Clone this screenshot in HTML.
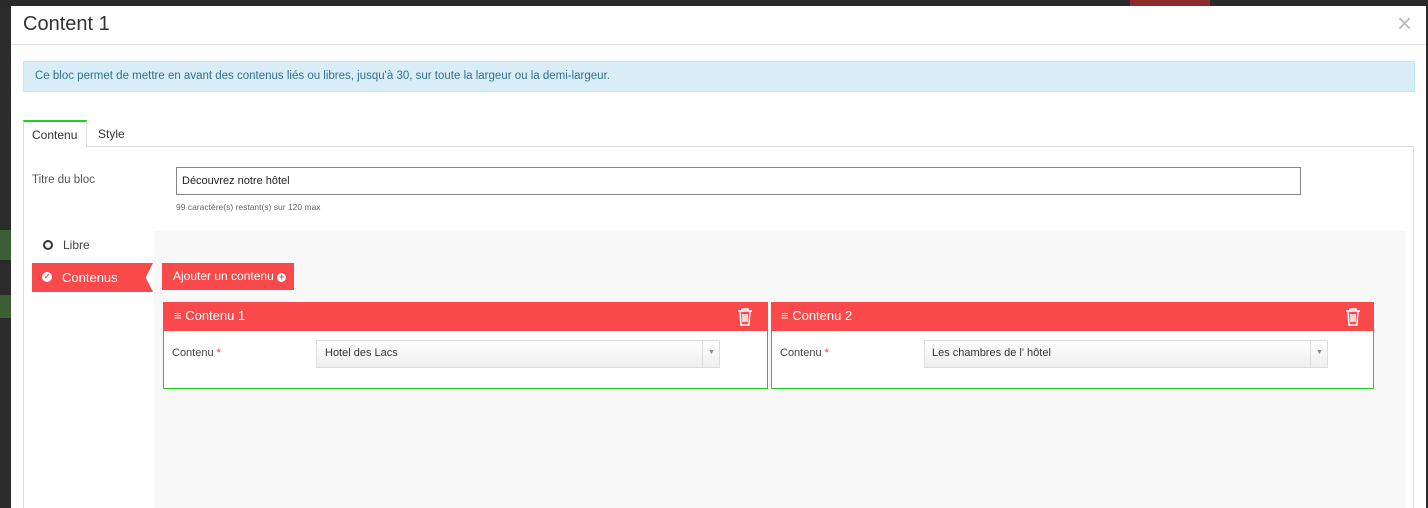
<!DOCTYPE html>
<html><head><style>
*{box-sizing:border-box;margin:0;padding:0}
body{width:1428px;height:508px;overflow:hidden;background:#2b2b2b;font-family:"Liberation Sans",sans-serif;position:relative;color:#333}
.a{position:absolute;white-space:nowrap}
</style></head><body>
<div class="a" style="left:0;top:0;width:1428px;height:6px;background:#2a2a2a"></div>
<div class="a" style="left:1130px;top:0;width:80px;height:6px;background:#8b2b2b"></div>
<div class="a" style="left:0;top:230px;width:11px;height:30px;background:#3b5e35"></div>
<div class="a" style="left:0;top:295px;width:11px;height:23px;background:#3b5e35"></div>
<div class="a" style="left:11px;top:6px;width:1415px;height:502px;background:#fff"></div>
<div class="a" style="left:23px;top:13px;font-size:20px;color:#333">Content 1</div>
<div class="a" style="left:1397px;top:8px;font-size:26px;color:#bbb;font-weight:300">×</div>
<div class="a" style="left:11px;top:44px;width:1415px;height:1px;background:#e5e5e5"></div>
<div class="a" style="left:23px;top:61px;width:1392px;height:31px;background:#d9edf7;border:1px solid #bce8f1;color:#31708f;font-size:11.5px;padding:8px 11px">Ce bloc permet de mettre en avant des contenus liés ou libres, jusqu'à 30, sur toute la largeur ou la demi-largeur.</div>
<div class="a" style="left:23px;top:146px;width:1391px;height:1px;background:#ddd"></div>
<div class="a" style="left:23px;top:146px;width:1px;height:362px;background:#ddd"></div>
<div class="a" style="left:1413px;top:146px;width:1px;height:362px;background:#ddd"></div>
<div class="a" style="left:23px;top:120px;width:64px;height:27px;background:#fff;border:1px solid #ddd;border-bottom:none;border-top:2px solid #1fd01f;font-size:12px;padding:6px 8px;color:#333">Contenu</div>
<div class="a" style="left:98px;top:127px;font-size:12px;color:#333">Style</div>
<div class="a" style="left:32px;top:174px;font-size:11.5px;color:#555">Titre du bloc</div>
<div class="a" style="left:176px;top:167px;width:1125px;height:28px;border:1px solid #888;font-size:11px;padding:7px 5px;color:#222">Découvrez notre hôtel</div>
<div class="a" style="left:176px;top:202px;font-size:8.5px;color:#666">99 caractère(s) restant(s) sur 120 max</div>
<div class="a" style="left:154px;top:231px;width:1252px;height:277px;background:#f8f8f8"></div>
<div class="a" style="left:43px;top:240px;width:10px;height:10px;border:2px solid #333;border-radius:50%"></div>
<div class="a" style="left:63px;top:238px;font-size:12px;color:#444">Libre</div>
<div class="a" style="left:32px;top:263px;width:121px;height:29px;background:#f9494b;clip-path:polygon(0 0,100% 0,94% 50%,100% 100%,0 100%)"></div>
<div class="a" style="left:42px;top:272px;width:10px;height:10px;background:#fff;border-radius:50%;color:#f9494b;font-size:8px;line-height:10px;text-align:center;font-weight:bold">✓</div>
<div class="a" style="left:62px;top:270px;font-size:13px;color:#fff">Contenus</div>
<div class="a" style="left:162px;top:263px;width:132px;height:27px;background:#f9494b;color:#fff;font-size:12px;padding:6px 11px">Ajouter un contenu <span style="display:inline-block;width:9px;height:9px;background:#fff;border-radius:50%;color:#f9494b;font-size:9px;line-height:9px;text-align:center;font-weight:bold;vertical-align:0">+</span></div>

<div class="a" style="left:163px;top:302px;width:605px;height:87px;background:#fff;border:1px solid #1fd01f"></div>
<div class="a" style="left:163px;top:302px;width:605px;height:29px;background:#f9494b;color:#fff;font-size:13px;padding:6px 11px">≡ Contenu 1</div>
<div class="a" style="left:172px;top:347px;font-size:11px;color:#444">Contenu <span style="color:#e33">*</span></div>
<div class="a" style="left:316px;top:340px;width:404px;height:28px;border:1px solid #ddd;background:linear-gradient(#fff,#eee);font-size:11px;padding:6px 8px;color:#333">Hotel des Lacs</div>
<div class="a" style="left:702px;top:341px;width:1px;height:26px;background:#ddd"></div>
<div class="a" style="left:708px;top:349px;font-size:7px;color:#888">▼</div>
<svg class="a" style="left:737px;top:308px" width="16" height="18" viewBox="0 0 16 18" fill="none" stroke="#fff" stroke-width="1.5"><path d="M1 3h14M5 3V1h6v2M3 3l1 14h8l1-14M6 6v8M8 6v8M10 6v8"/></svg>

<div class="a" style="left:771px;top:302px;width:603px;height:87px;background:#fff;border:1px solid #1fd01f"></div>
<div class="a" style="left:771px;top:302px;width:603px;height:29px;background:#f9494b;color:#fff;font-size:13px;padding:6px 10px">≡ Contenu 2</div>
<div class="a" style="left:780px;top:347px;font-size:11px;color:#444">Contenu <span style="color:#e33">*</span></div>
<div class="a" style="left:924px;top:340px;width:404px;height:28px;border:1px solid #ddd;background:linear-gradient(#fff,#eee);font-size:11px;padding:6px 7px;color:#333">Les chambres de l' hôtel</div>
<div class="a" style="left:1310px;top:341px;width:1px;height:26px;background:#ddd"></div>
<div class="a" style="left:1316px;top:349px;font-size:7px;color:#888">▼</div>
<svg class="a" style="left:1345px;top:308px" width="16" height="18" viewBox="0 0 16 18" fill="none" stroke="#fff" stroke-width="1.5"><path d="M1 3h14M5 3V1h6v2M3 3l1 14h8l1-14M6 6v8M8 6v8M10 6v8"/></svg>
</body></html>
